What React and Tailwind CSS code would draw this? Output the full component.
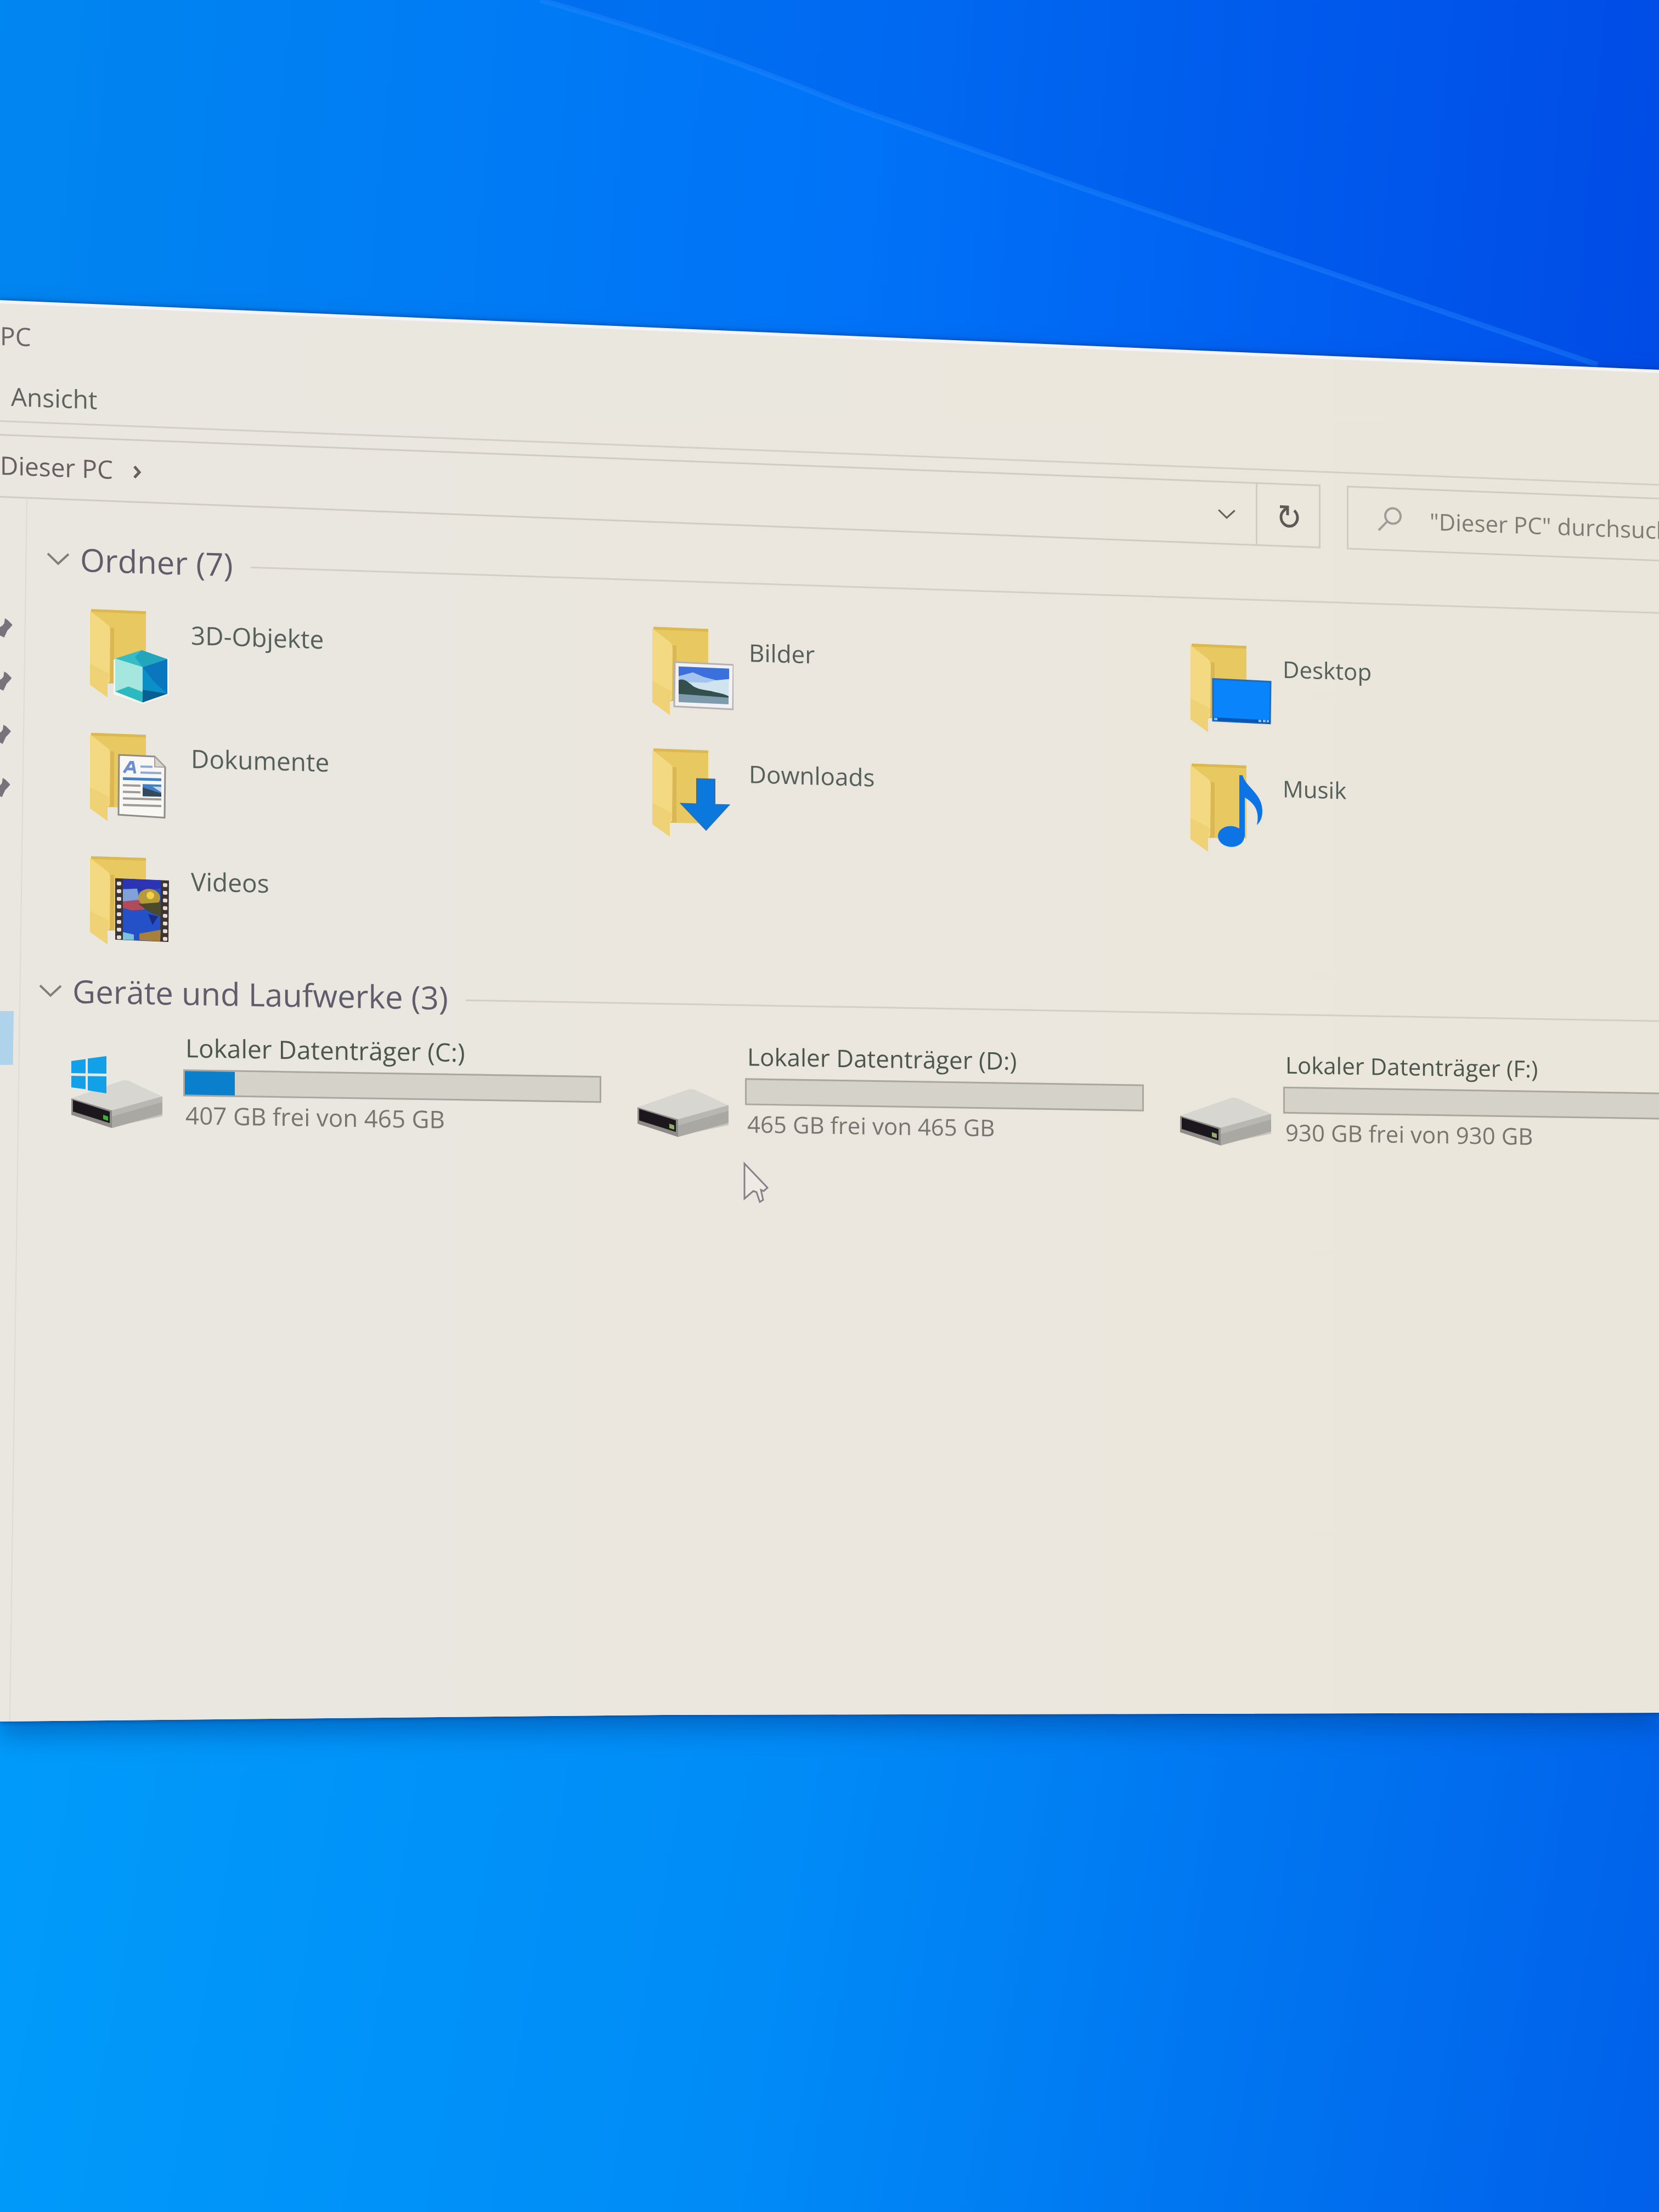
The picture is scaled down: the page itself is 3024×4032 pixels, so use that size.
// src/App.jsx
const columns = [
  { text: "text-[46px]", sub: "text-[44px]", gap: "gap-9" },
  { text: "text-[44px]", sub: "text-[42px]", gap: "gap-7" },
  { text: "text-[42px]", sub: "text-[42px]", gap: "gap-5" },
];

const folderRows = [
  {
    tilt: "skew-y-[1.8deg]",
    items: [
      { name: "3D-Objekte", Badge: CubeBadge },
      { name: "Bilder", Badge: PictureBadge },
      { name: "Desktop", Badge: DesktopBadge },
    ],
  },
  {
    tilt: "skew-y-[1.6deg]",
    items: [
      { name: "Dokumente", Badge: DocumentBadge },
      { name: "Downloads", Badge: DownloadBadge },
      { name: "Musik", Badge: MusicBadge },
    ],
  },
  {
    tilt: "skew-y-[1.3deg]",
    items: [{ name: "Videos", Badge: VideoBadge }],
  },
];

const drives = [
  { name: "Lokaler Datenträger (C:)", info: "407 GB frei von 465 GB", used: 12, system: true },
  { name: "Lokaler Datenträger (D:)", info: "465 GB frei von 465 GB", used: 0 },
  { name: "Lokaler Datenträger (F:)", info: "930 GB frei von 930 GB", used: 0 },
];

function CubeBadge() {
  return (
    <g>
      <path d="M48 94 96 76 143 90 143 151 98 168 48 153Z" fill="#fff" stroke="#f6f4ee" strokeWidth="6" />
      <path d="M48 90 96 73 143 88 98 104Z" fill="#35bcc4" />
      <path d="M96 73 143 88 98 104 84 86Z" fill="#22a5bd" />
      <path d="M48 90 98 104 98 168 48 150Z" fill="#a5e6df" />
      <path d="M48 150 72 140 98 149 98 168Z" fill="#2cb9bf" />
      <path d="M98 104 143 88 143 151 98 168Z" fill="#0a8fc6" />
      <path d="M98 104 143 88 143 151 120 131Z" fill="#0a76be" />
      <path d="M98 145 120 157 98 168Z" fill="#064a78" />
      <path d="M98 145 143 151 98 168Z" fill="#075f94" />
    </g>
  );
}

function PictureBadge() {
  return (
    <g>
      <path d="M43 64 150 66 149 147 42 145Z" fill="#f3f1f2" stroke="#b4b1b3" strokeWidth="3" />
      <path d="M50 72 142 73 141 138 50 137Z" fill="#cfe4ee" />
      <path d="M50 72 142 73 142 92 118 95 96 90 76 82 50 90Z" fill="#3b6fdc" />
      <path d="M50 90 76 82 96 90 118 95 100 100 50 100Z" fill="#a4c4ee" />
      <path d="M50 97c10-5 18 4 28 11 12 6 24 5 36 8 12 2 20 4 27 7v4l-91-2Z" fill="#33504c" />
      <path d="M50 122 141 126 141 138 50 137Z" fill="#7f9cae" />
    </g>
  );
}

function DesktopBadge() {
  return (
    <g>
      <path d="M43 64 148 66 147 142 43 140Z" fill="#0a84fb" stroke="#1b6cc0" strokeWidth="3" />
      <path d="M44 134 147 136 147 142 44 140Z" fill="#0b56b0" />
      <path d="M45 135h6v4h-6zM126 136h5v4h-5zM134 136h5v4h-5zM141 136h4v4h-4z" fill="#8fc4f8" />
    </g>
  );
}

function DocumentBadge() {
  return (
    <g>
      <path d="M55 40 120 41 139 60 138 152 54 149Z" fill="#f8f7f4" stroke="#8d8a8b" strokeWidth="3" />
      <path d="M120 41 120 60 139 60Z" fill="#d9d4cd" stroke="#a39f9b" strokeWidth="2" />
      <path d="M64 72 76 53 80 53 84 73M68 65 82 65" fill="none" stroke="#6d8fd2" strokeWidth="5" />
      <path d="M94 60h22M94 71h38" stroke="#8fa9d2" strokeWidth="4" />
      <path d="M62 83h70" stroke="#4480c4" strokeWidth="5" />
      <path d="M62 95h32M62 107h32M62 119h70M62 131h70" stroke="#9c9b98" strokeWidth="4" />
      <path d="M98 92h34v22H98z" fill="#3f80c6" />
      <path d="M98 98 132 108 132 114 98 114Z" fill="#33495c" />
      <path d="M116 96 132 96 132 106Z" fill="#c5dbea" />
    </g>
  );
}

function DownloadBadge() {
  return <path d="M83 54H116V100H142L100 147 54 100H83Z" fill="#0b78dd" stroke="#2b6fb0" strokeWidth="2" />;
}

function MusicBadge() {
  return (
    <g fill="#0c74e4">
      <ellipse cx="76" cy="132" rx="24" ry="19" />
      <path d="M91 20H97C103 42 133 52 133 84 133 97 129 104 123 110 128 88 122 72 101 60V132H91Z" />
    </g>
  );
}

function VideoBadge() {
  const holes = [50, 64, 78, 92, 106, 120, 134, 148];
  return (
    <g>
      <path d="M48 40 146 42 145 154 48 152Z" fill="#3a3433" />
      <path d="M62 41 131 42 130 153 62 152Z" fill="#2450c8" />
      <path d="M62 41 131 42 131 56 98 64 62 58Z" fill="#2b35b4" />
      <path d="M62 60 88 58 94 90 62 86Z" fill="#7fa2d8" />
      <path d="M62 82 94 78 102 96 78 98 62 94Z" fill="#b04b5c" />
      <ellipse cx="110" cy="74" rx="20" ry="16" fill="#b79a3a" />
      <circle cx="112" cy="70" r="7" fill="#f0d34a" />
      <path d="M90 86 131 82 131 108 110 100Z" fill="#4b4a2c" />
      <path d="M108 104 126 108 116 124Z" fill="#1c2a80" />
      <path d="M62 138 82 142 82 152 62 152Z" fill="#7cc2d8" />
      <path d="M92 140 131 132 130 153 92 152Z" fill="#a8803c" />
      {holes.map((y) => (
        <g key={y} fill="#e9dcd6">
          <rect x="51" y={y - 4} width="8" height="7" rx="2" />
          <rect x="135" y={y - 3} width="8" height="7" rx="2" />
        </g>
      ))}
    </g>
  );
}

function FolderIcon({ Badge }) {
  return (
    <svg viewBox="0 0 150 172" className="w-[150px] h-[172px] shrink-0" aria-hidden="true">
      <path d="M4 1 104 2 104 135 4 136Z" fill="#e8c860" />
      <path d="M4 1 104 2 104 7 4 6Z" fill="#dcb94f" />
      <path d="M38 34 46 34 46 135 36 135Z" fill="#dab753" />
      <path d="M2 4 34 28Q39 32 39 40L38 132 34 136 34 161 2 139Z" fill="#f3d982" />
      <path d="M2 100 38 118 34 136 34 161 2 139Z" fill="#efd276" />
      <Badge />
    </svg>
  );
}

function DriveIcon({ system }) {
  return (
    <svg viewBox="0 0 170 134" className="w-[170px] h-[134px] mt-[50px] shrink-0" aria-hidden="true">
      <path d="M2 80 98 44 168 76 168 108 76 129 2 108Z" fill="#c9c6be" />
      <path d="M2 78 92 45Q100 42 108 45L168 72 76 99Z" fill="#d8d6d0" />
      <path d="M76 99 168 72 168 104 76 131Z" fill="#aaa8a3" />
      <path d="M76 99 168 72 168 82 76 110Z" fill="#b9b7b1" />
      <path d="M2 78 76 99 76 131 2 108Z" fill="#8e8b88" />
      <path d="M5 81 72 101 72 122 5 102Z" fill="#1c171c" />
      <path d="M60 107 69 110 69 118 60 115Z" fill={system ? "#3fae3c" : "#8fae68"} />
      {system && (
        <g fill="#12a0e8">
          <path d="M2 10 28 6 28 32 2 32ZM32 5 66 0 66 32 32 32Z" />
          <path d="M2 37 28 37 28 61 2 58ZM32 37 66 37 66 68 32 63Z" />
        </g>
      )}
    </svg>
  );
}

function PinIcon() {
  return (
    <svg viewBox="0 0 26 37" className="w-[26px] h-[37px]" aria-hidden="true">
      <path d="M12 0 17 3 26 12 21 18 17 22 11 35 5 32 0 30 0 18 8 13 11 9Z" fill="#77737a" />
    </svg>
  );
}

function Chevron({ className }) {
  return (
    <svg viewBox="0 0 44 24" className={className} aria-hidden="true">
      <path d="M3 3 22 21 41 3" fill="none" stroke="currentColor" strokeWidth="4" />
    </svg>
  );
}

function SectionHeader({ title, className }) {
  return (
    <div className={`flex items-center h-[80px] origin-left ${className}`}>
      <button type="button" className="flex items-center gap-[18px] text-[58px] leading-[80px] text-[#615c6b]">
        <Chevron className="w-[44px] h-[24px] text-[#827d7a]" />
        <span className="whitespace-nowrap">{title}</span>
      </button>
      <div className="flex-1 ml-8 mt-2 h-[3px] bg-[#d3cfc6]" />
    </div>
  );
}

function Folder({ item, column }) {
  return (
    <button type="button" className={`flex items-start text-left ${column.gap}`}>
      <FolderIcon Badge={item.Badge} />
      <span className={`pt-3 leading-[60px] text-[#55605a] ${column.text}`}>{item.name}</span>
    </button>
  );
}

function Drive({ drive, column }) {
  return (
    <button type="button" className={`flex items-start text-left ${column.gap}`}>
      <DriveIcon system={drive.system} />
      <span className="flex-1 flex flex-col gap-2 pr-16">
        <span className={`pl-1 leading-[64px] whitespace-nowrap text-[#4b564d] ${column.text}`}>{drive.name}</span>
        <span className="block h-[49px] border-[3px] border-[#aaa79f] bg-[#d5d2c9]">
          <span className="block h-full bg-[#0a80cc]" style={{ width: `${drive.used}%` }} />
        </span>
        <span className={`pl-1 leading-[52px] whitespace-nowrap text-[#77756f] ${column.sub}`}>{drive.info}</span>
      </span>
    </button>
  );
}

function Wallpaper() {
  return (
    <svg
      viewBox="0 0 3024 700"
      preserveAspectRatio="none"
      className="absolute top-0 left-0 w-full h-[700px]"
      aria-hidden="true"
    >
      <path d="M984 0Q1260 76 1543 192L1987 348 2353 473 2912 665 3024 700V0Z" fill="#0038d0" opacity="0.14" />
      <path
        d="M984 0Q1260 76 1543 192L1987 348 2353 473 2912 665"
        fill="none"
        stroke="#2a90ff"
        strokeWidth="10"
        opacity="0.35"
      />
    </svg>
  );
}

export default function App() {
  return (
    <div className="relative min-h-screen flex flex-col overflow-hidden pt-[547px] pb-[894px] bg-no-repeat bg-[linear-gradient(95deg,#0086f0_0%,#0073f8_50%,#004cea_100%),linear-gradient(100deg,#009dfb_0%,#008bf7_50%,#0060ea_100%)] bg-[length:100%_50%,100%_50%] bg-[position:top,bottom] font-['Open_Sans','Noto_Sans',sans-serif]">
      <Wallpaper />

      <div className="relative flex-1 flex flex-col drop-shadow-[0_24px_24px_rgba(0,60,140,0.45)]">
        <div className="flex-1 flex flex-col drop-shadow-[0_0_4px_rgba(0,40,110,0.7)]">
          <div className="flex-1 flex flex-col bg-[#f5f2f8] [clip-path:polygon(0_0,100%_127px,100%_calc(100%_-_16px),40%_calc(100%_-_12px),0_100%)]">
            <main className="relative flex-1 flex flex-col mt-[6px] bg-[linear-gradient(90deg,#e9e7e0,#ebe6db)] [clip-path:polygon(0_0,100%_127px,100%_100%,0_100%)]">
              <header className="origin-left skew-y-[2.2deg] border-b-[3px] border-[#d3cfc6]">
                <h1 className="pb-2 text-[46px] leading-[116px] text-[#6d6668]">PC</h1>
                <nav className="h-[89px] pl-5">
                  <button type="button" className="text-[46px] leading-[89px] text-[#5f625e]">
                    Ansicht
                  </button>
                </nav>
              </header>

              <div className="flex gap-12 mt-[22px] -mr-[71px] h-[116px] origin-left skew-y-[2.2deg]">
                <div className="flex-1 flex border-[3px] border-l-0 border-[#d0ccc3]">
                  <button type="button" className="flex items-center gap-9 pb-1 text-[46px] text-[#665f60]">
                    Dieser PC
                    <svg viewBox="0 0 16 26" className="w-[16px] h-[26px] mt-2" aria-hidden="true">
                      <path d="M3 3 12 13 3 23" fill="none" stroke="currentColor" strokeWidth="5" />
                    </svg>
                  </button>
                  <button type="button" aria-label="Vorherige Orte" className="ml-auto px-9 pt-1 text-[#685f5e]">
                    <Chevron className="w-[34px] h-[22px]" />
                  </button>
                  <button
                    type="button"
                    aria-label="Aktualisieren"
                    className="flex items-center justify-center w-[115px] pt-1 border-l-[3px] border-[#d0ccc3] text-[#5f5857]"
                  >
                    <svg viewBox="0 0 40 44" className="w-[40px] h-[44px]" fill="none" stroke="currentColor" strokeWidth="5" aria-hidden="true">
                      <path d="M31 11A15 16 0 1 1 11 13L18 6" />
                      <path d="M5 5H19V20" />
                    </svg>
                  </button>
                </div>
                <label className="flex items-center gap-12 w-[640px] pl-[52px] border-[3px] border-[#d0ccc3]">
                  <svg viewBox="0 0 48 48" className="w-[48px] h-[48px] shrink-0" fill="none" stroke="#a19c97" strokeWidth="4" aria-hidden="true">
                    <circle cx="29" cy="18" r="14" />
                    <path d="M19 28 3 45" />
                  </svg>
                  <input
                    type="search"
                    aria-label="Suchen"
                    placeholder={'"Dieser PC" durchsuchen'}
                    className="w-[500px] bg-transparent outline-none text-[42px] placeholder:text-[#7e7c76]"
                  />
                </label>
              </div>

              <div className="flex-1 flex">
                {/* only the pins and the selected row of the navigation pane are on screen */}
                <aside className="w-[50px] shrink-0 border-r-[2px] border-[#dfdbd3] origin-top -skew-x-[0.8deg]">
                  <div className="flex flex-col gap-[60px] mt-[220px]">
                    <PinIcon />
                    <PinIcon />
                    <PinIcon />
                    <PinIcon />
                  </div>
                  <div className="mt-[388px] w-[38px] h-[98px] bg-[#aed3ea]" />
                </aside>

                <div className="flex-1 min-w-0 -ml-[50px] -mr-[88px] pt-[68px]">
                  <SectionHeader title="Ordner (7)" className="pl-[84px] skew-y-[1.85deg]" />
                  <div className="flex flex-col gap-[54px] mt-[49px]">
                    {folderRows.map((row) => (
                      <div
                        key={row.tilt}
                        className={`grid grid-cols-[1025fr_981fr_944fr] pl-[162px] origin-left ${row.tilt}`}
                      >
                        {row.items.map((item, i) => (
                          <Folder key={item.name} item={item} column={columns[i]} />
                        ))}
                      </div>
                    ))}
                  </div>

                  <SectionHeader title="Geräte und Laufwerke (3)" className="mt-[36px] pl-[70px] skew-y-[1deg]" />
                  <div className="grid grid-cols-[1032fr_989fr_963fr] mt-[28px] pl-[128px] origin-left skew-y-[0.9deg]">
                    {drives.map((drive, i) => (
                      <Drive key={drive.name} drive={drive} column={columns[i]} />
                    ))}
                  </div>
                </div>
              </div>

              <svg viewBox="0 0 48 78" className="absolute left-[1354px] top-[1564px] w-[48px] h-[78px]" aria-hidden="true">
                <path
                  d="M3 4 45 48 38 54 33 52 37 70 31 74 25 56 19 54 3 68Z"
                  fill="#efebe4"
                  stroke="#87808a"
                  strokeWidth="3"
                />
              </svg>
            </main>
          </div>
        </div>
      </div>
    </div>
  );
}
